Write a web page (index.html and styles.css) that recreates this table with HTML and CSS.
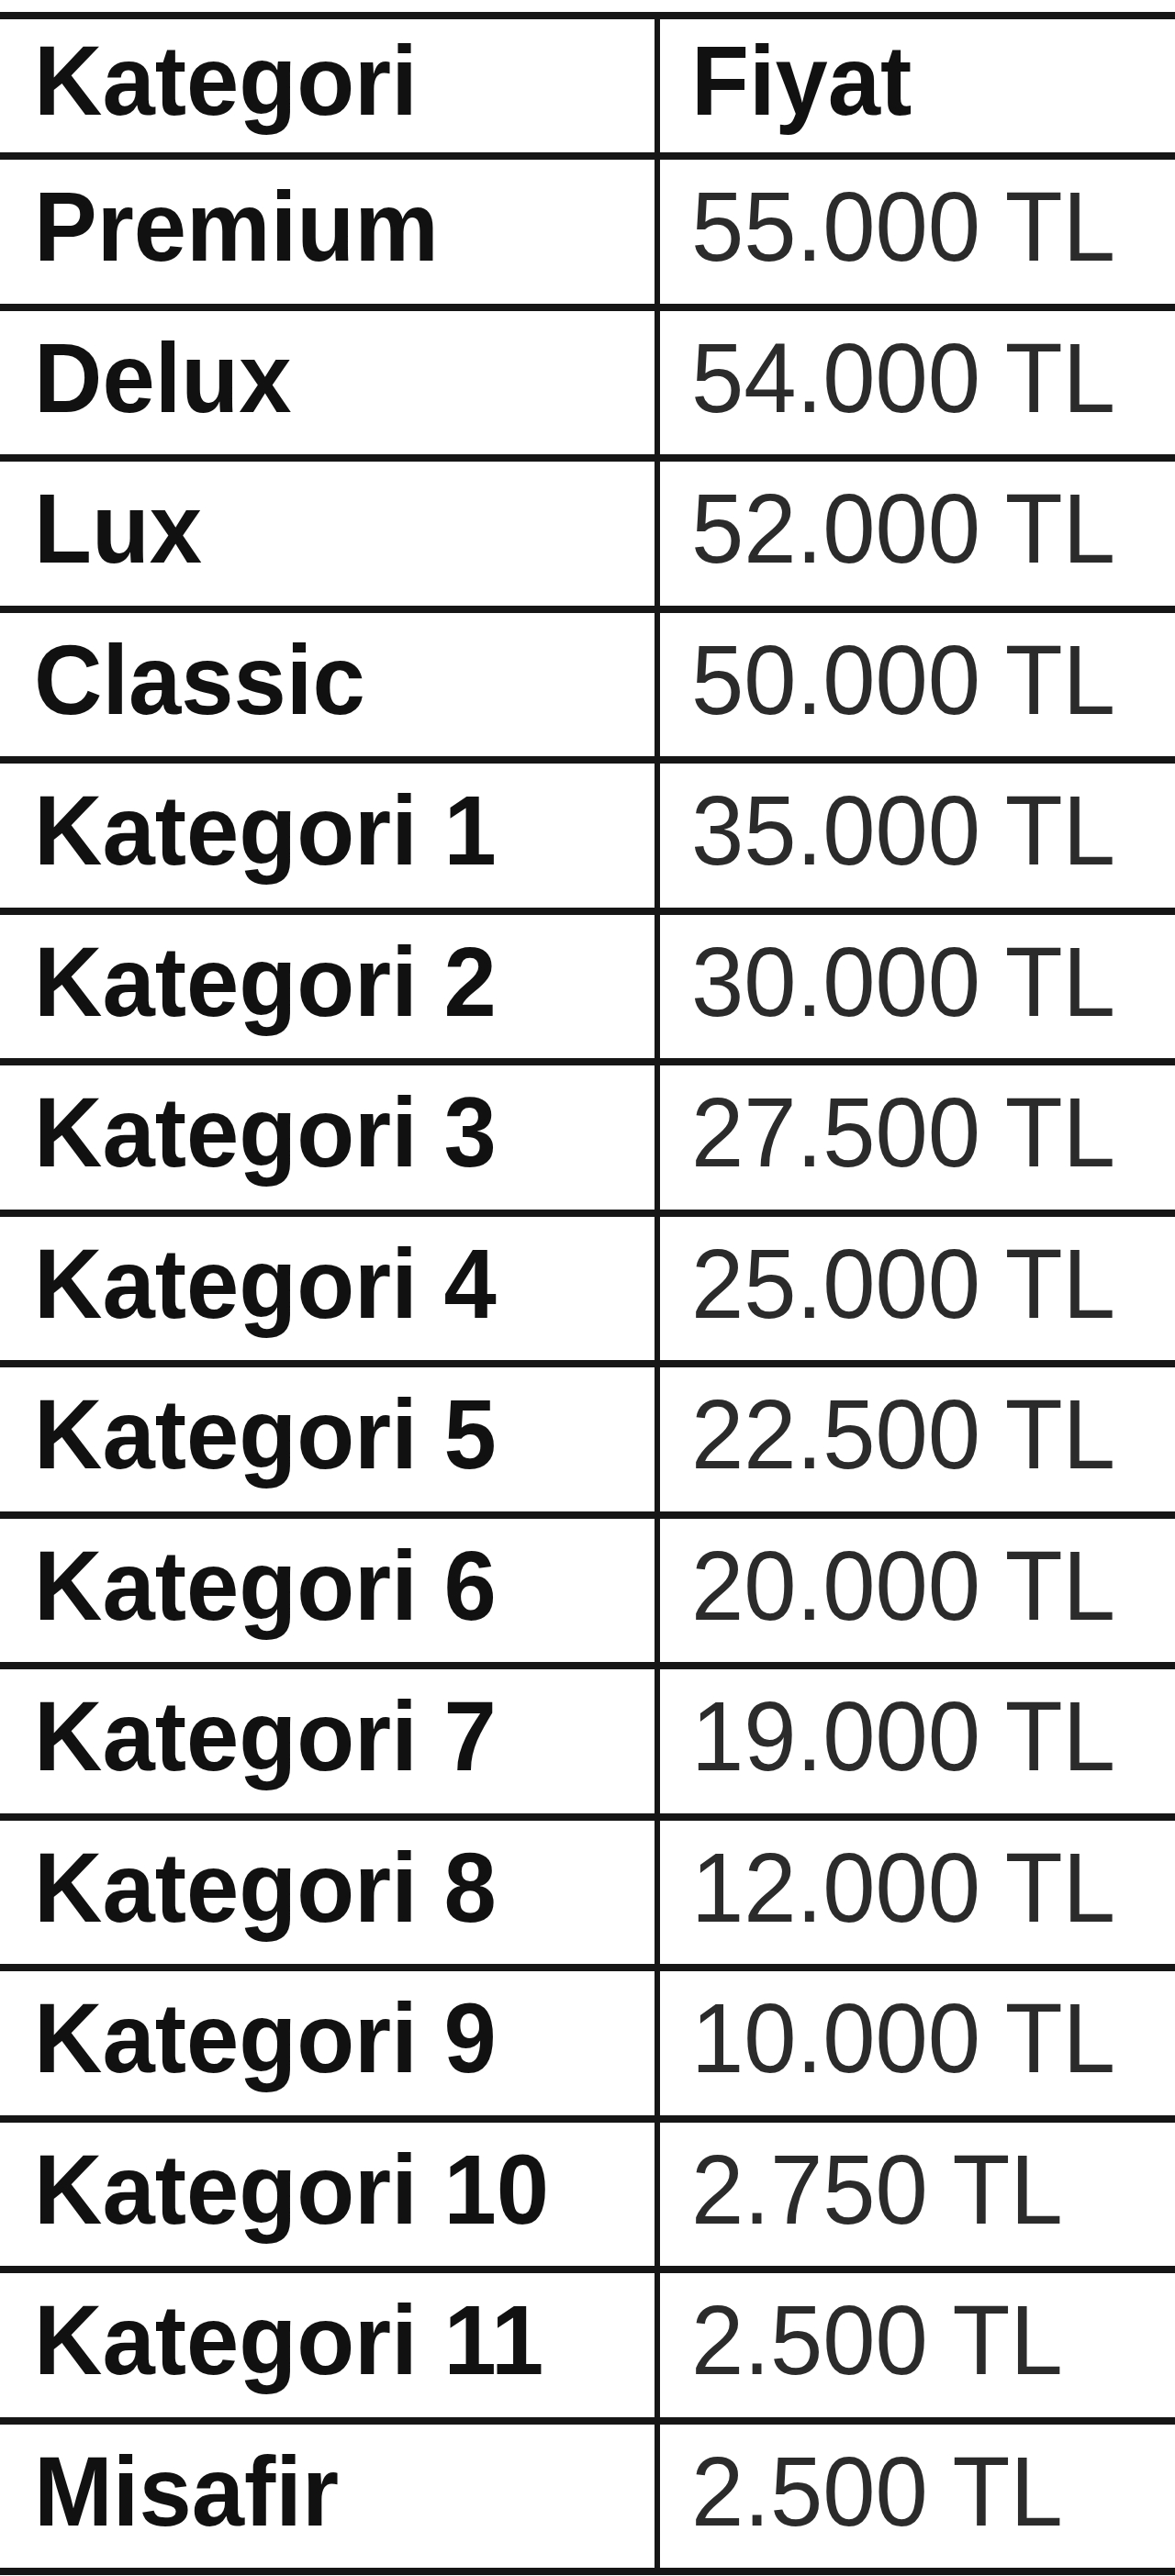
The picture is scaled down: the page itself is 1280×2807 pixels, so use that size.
FILE: index.html
```html
<!DOCTYPE html>
<html lang="tr">
<head>
<meta charset="utf-8">
<title>Kategori Fiyat</title>
<link rel="stylesheet" href="styles.css">
</head>
<body>
<table class="prices">
  <thead>
    <tr><th class="cat"><span class="txt">Kategori</span></th><th class="price"><span class="txt">Fiyat</span></th></tr>
  </thead>
  <tbody>
    <tr><td class="cat"><span class="txt">Premium</span></td><td class="price"><span class="txt">55.000 TL</span></td></tr>
    <tr><td class="cat"><span class="txt">Delux</span></td><td class="price"><span class="txt">54.000 TL</span></td></tr>
    <tr><td class="cat"><span class="txt">Lux</span></td><td class="price"><span class="txt">52.000 TL</span></td></tr>
    <tr><td class="cat"><span class="txt">Classic</span></td><td class="price"><span class="txt">50.000 TL</span></td></tr>
    <tr><td class="cat"><span class="txt">Kategori 1</span></td><td class="price"><span class="txt">35.000 TL</span></td></tr>
    <tr><td class="cat"><span class="txt">Kategori 2</span></td><td class="price"><span class="txt">30.000 TL</span></td></tr>
    <tr><td class="cat"><span class="txt">Kategori 3</span></td><td class="price"><span class="txt">27.500 TL</span></td></tr>
    <tr><td class="cat"><span class="txt">Kategori 4</span></td><td class="price"><span class="txt">25.000 TL</span></td></tr>
    <tr><td class="cat"><span class="txt">Kategori 5</span></td><td class="price"><span class="txt">22.500 TL</span></td></tr>
    <tr><td class="cat"><span class="txt">Kategori 6</span></td><td class="price"><span class="txt">20.000 TL</span></td></tr>
    <tr><td class="cat"><span class="txt">Kategori 7</span></td><td class="price"><span class="txt">19.000 TL</span></td></tr>
    <tr><td class="cat"><span class="txt">Kategori 8</span></td><td class="price"><span class="txt">12.000 TL</span></td></tr>
    <tr><td class="cat"><span class="txt">Kategori 9</span></td><td class="price"><span class="txt">10.000 TL</span></td></tr>
    <tr><td class="cat"><span class="txt">Kategori 10</span></td><td class="price"><span class="txt">2.750 TL</span></td></tr>
    <tr><td class="cat"><span class="txt">Kategori 11</span></td><td class="price"><span class="txt">2.500 TL</span></td></tr>
    <tr><td class="cat"><span class="txt">Misafir</span></td><td class="price"><span class="txt">2.500 TL</span></td></tr>
  </tbody>
</table>
</body>
</html>
```
FILE: styles.css
```css
html, body {
  margin: 0;
  padding: 0;
  background: #ffffff;
}

.prices {
  margin-top: 13px;
  width: 1280px;
  border-collapse: separate;
  border-spacing: 0;
  table-layout: fixed;
  font-family: "Liberation Sans", Arial, sans-serif;
  font-size: 103px;
  line-height: 1.15;
}

.prices th,
.prices td {
  box-sizing: content-box;
  text-align: left;
  vertical-align: middle;
  padding: 0 0 8px 0;
  border-bottom: 8px solid #161616;
  white-space: nowrap;
  overflow: hidden;
}

.prices th {
  border-top: 8px solid #161616;
  height: 137px;
}

.prices td {
  height: 148.5px;
}

.prices .txt {
  display: inline-block;
  transform: scaleY(1.05);
  transform-origin: 50% 60%;
}

.prices .cat {
  width: 676px;
  padding-left: 37px;
  font-weight: bold;
  color: #111111;
}

.prices .price {
  padding-left: 34px;
  border-left: 6px solid #161616;
  font-weight: normal;
  color: #2b2b2b;
}

.prices th.price {
  font-weight: bold;
  color: #111111;
}
```
